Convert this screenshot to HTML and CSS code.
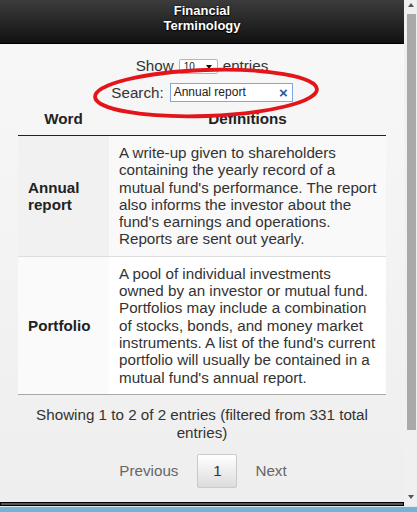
FILE: index.html
```html
<!DOCTYPE html>
<html lang="en">
<head>
    <meta charset="UTF-8">
    <meta name="viewport" content="width=device-width, initial-scale=1.0">
    <title>Financial Terminology</title>
    <link rel="stylesheet" href="styles.css">
</head>
<body>
    <div class="window">
        <div class="viewport">
            <div class="page">
                <header class="bar">
                    <h1 class="title"><span>Financial</span><span>Terminology</span></h1>
                </header>
                <div class="content">
                    <div class="length">
                        Show <span class="select">10<span class="caret"></span></span> entries
                    </div>
                    <div class="filter">
                        <label>Search:</label>
                        <span class="search">Annual report<span class="clear">&times;</span></span>
                    </div>
                    <table class="terms">
                        <thead>
                            <tr>
                                <th class="col-word">Word</th>
                                <th>Definitions</th>
                            </tr>
                        </thead>
                        <tbody>
                            <tr class="odd">
                                <td class="word">Annual report</td>
                                <td>A write-up given to shareholders containing the yearly record of a mutual fund's performance. The report also informs the investor about the fund's earnings and operations. Reports are sent out yearly.</td>
                            </tr>
                            <tr class="even">
                                <td class="word">Portfolio</td>
                                <td>A pool of individual investments owned by an investor or mutual fund. Portfolios may include a combination of stocks, bonds, and money market instruments. A list of the fund's current portfolio will usually be contained in a mutual fund's annual report.</td>
                            </tr>
                        </tbody>
                    </table>
                    <div class="info">Showing 1 to 2 of 2 entries (filtered from 331 total entries)</div>
                    <div class="pager">
                        <span class="page-btn prev">Previous</span>
                        <span class="page-btn current">1</span>
                        <span class="page-btn next">Next</span>
                    </div>
                    <!-- hand-drawn highlight round the search box -->
                    <svg class="mark" width="232" height="58" viewBox="0 0 232 58">
                        <ellipse cx="116" cy="29" rx="111" ry="23" transform="rotate(-2 116 29)" fill="none" stroke="#e4141b" stroke-width="3.8"/>
                    </svg>
                </div>
                <div class="footer-bar"></div>
            </div>
            <div class="scrollbar">
                <span class="arrow up"></span>
                <div class="thumb"></div>
                <span class="arrow down"></span>
            </div>
        </div>
        <div class="taskbar"></div>
    </div>
</body>
</html>
```

FILE: styles.css
```css
body {
    margin: 0;
    font-family: "Liberation Sans", Arial, sans-serif;
    font-size: 15.2px;
    color: #333;
}
.window {
    display: flex;
    flex-direction: column;
    width: 417px;
    height: 512px;
    overflow: hidden;
}
.viewport {
    display: flex;
    flex: 1;
    min-height: 0;
}
.page {
    display: flex;
    flex-direction: column;
    width: 404px;
    background: linear-gradient(#f8f8f8, #eeeeee);
}
.bar {
    height: 43px;
    background: linear-gradient(#3c3c3c, #111);
    border-bottom: 1px solid #000;
    text-align: center;
}
.title {
    display: flex;
    flex-direction: column;
    align-items: center;
    margin: 0;
    padding-top: 3px;
    font-size: 13px;
    font-weight: bold;
    color: #fff;
    text-shadow: 0 1px 1px #000, 0 0 2px #000;
}
.title span {
    height: 15px;
    line-height: 15px;
}
.content {
    position: relative;
    flex: 1;
    padding: 13px 18px 0;
}
.length {
    display: flex;
    justify-content: center;
    align-items: center;
    height: 17px;
    gap: 5px;
}
.select {
    position: relative;
    box-sizing: border-box;
    width: 39px;
    height: 15px;
    margin-top: 2px;
    padding-left: 4px;
    font-size: 10px;
    line-height: 13px;
    color: #222;
    background: #fff;
    border: 1px solid #b5b5b5;
    border-radius: 2px;
}
.caret {
    position: absolute;
    right: 5px;
    top: 5px;
    border-left: 3px solid transparent;
    border-right: 3px solid transparent;
    border-top: 4px solid #111;
}
.filter {
    display: flex;
    justify-content: center;
    align-items: center;
    gap: 6px;
    margin-top: 9px;
    height: 19px;
}
.search {
    position: relative;
    box-sizing: border-box;
    width: 123px;
    height: 19px;
    padding-left: 3px;
    font-size: 12px;
    line-height: 17px;
    color: #222;
    background: #fff;
    border: 1px solid #7da9e0;
}
.clear {
    position: absolute;
    right: 4px;
    top: 0;
    font-size: 15px;
    font-weight: bold;
    color: #2c5aa0;
}
.terms {
    width: 100%;
    border-collapse: collapse;
    border-bottom: 1px solid #a8a8a8;
}
.terms th {
    padding: 8px 10px;
    font-weight: bold;
    color: #222;
    border-bottom: 1px solid #222;
}
.col-word {
    width: 71px;
}
.terms td {
    padding: 8px 8px 8px 10px;
    line-height: 17.3px;
    vertical-align: middle;
    text-align: left;
}
.terms tr.even td {
    border-top: 1px solid #ddd;
}
.word {
    font-weight: bold;
    color: #222;
}
.odd td {
    background: #f9f9f9;
}
.odd td.word {
    background: #f1f1f1;
}
.even td {
    background: #fff;
}
.even td.word {
    background: #fafafa;
}
.info {
    padding-top: 11px;
    line-height: 18px;
    text-align: center;
}
.pager {
    display: flex;
    justify-content: center;
    margin-top: 12px;
}
.page-btn {
    box-sizing: border-box;
    height: 34px;
    line-height: 32px;
    border: 1px solid transparent;
    color: #666;
}
.prev {
    padding: 0 18px 0 19px;
}
.next {
    padding: 0 17px;
}
.current {
    width: 40px;
    text-align: center;
    color: #333;
    border: 1px solid #cacaca;
    border-radius: 2px;
    background: linear-gradient(#fff, #dcdcdc);
}
.mark {
    position: absolute;
    left: 90px;
    top: 20px;
}
.footer-bar {
    height: 2px;
    margin-top: auto;
    border: 1px solid #000;
    background: #555;
}
.scrollbar {
    position: relative;
    width: 13px;
    background: #f0f0f0;
}
.thumb {
    position: absolute;
    left: 3px;
    right: 1px;
    top: 14px;
    height: 416px;
    background: #a9a9a9;
}
.arrow {
    position: absolute;
    left: 4px;
    border-left: 3px solid transparent;
    border-right: 3px solid transparent;
}
.up {
    top: 3px;
    border-bottom: 4px solid #555;
}
.down {
    bottom: 7px;
    border-top: 4px solid #555;
}
.taskbar {
    height: 5px;
    border-top: 1px solid #dfe9ef;
    background: #74b3d6;
}
```
